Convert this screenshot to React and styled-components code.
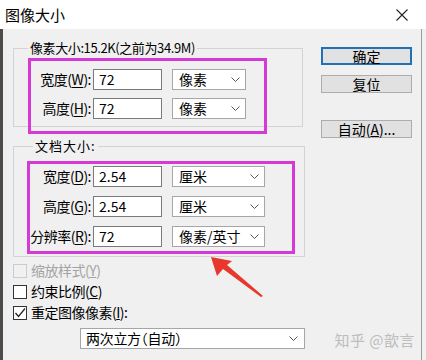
import styled, { createGlobalStyle } from "styled-components";

const GlobalStyle = createGlobalStyle`
  html, body {
    margin: 0;
    padding: 0;
    background: #f0f0f0;
  }
  body {
    font-family: "Noto Sans CJK SC", "Noto Sans", sans-serif;
    color: #000;
  }
`;

// 下拉框的小箭头
const Chevron = () => (
  <svg width="9" height="5" viewBox="0 0 9 5">
    <polyline points="0.5,0.5 4.5,4.5 8.5,0.5" fill="none" stroke="#555" strokeWidth="1" />
  </svg>
);

const CheckMark = () => (
  <svg width="12" height="12" viewBox="0 0 12 12">
    <polyline points="1.5,6 4.5,9.5 11,1.5" fill="none" stroke="#222" strokeWidth="1.2" />
  </svg>
);

export default function App() {
  const pixelRows = [
    { label: "宽度", key: "W", value: "72", unit: "像素" },
    { label: "高度", key: "H", value: "72", unit: "像素" },
  ];
  const docRows = [
    { label: "宽度", key: "D", value: "2.54", unit: "厘米" },
    { label: "高度", key: "G", value: "2.54", unit: "厘米" },
    { label: "分辨率", key: "R", value: "72", unit: "像素/英寸" },
  ];

  return (
    <>
      <GlobalStyle />
      <Window>
        <TitleBar>
          <span>图像大小</span>
          <svg width="12" height="12" viewBox="0 0 12 12">
            <path d="M0.5 0.5 L11.5 11.5 M11.5 0.5 L0.5 11.5" stroke="#222" strokeWidth="1.1" />
          </svg>
        </TitleBar>

        <Main>
          <LeftCol>
            <Group $width={290} $gap={11}>
              <Legend $indent={14}>像素大小:15.2K(之前为34.9M)</Legend>
              <Rows $top={13} $bottom={7} $gap={8}>
                {pixelRows.map((r) => (
                  <Row key={r.key}>
                    <Label>
                      {r.label}(<u>{r.key}</u>):
                    </Label>
                    <Input>{r.value}</Input>
                    <Select $width={74}>
                      <span>{r.unit}</span>
                      <Chevron />
                    </Select>
                  </Row>
                ))}
              </Rows>
            </Group>

            <Group $width={292} $gap={11}>
              <Legend $indent={19} $spacing={1}>
                文档大小:
              </Legend>
              <Rows $top={12} $bottom={9} $gap={9}>
                {docRows.map((r) => (
                  <Row key={r.key}>
                    <Label>
                      {r.label}(<u>{r.key}</u>):
                    </Label>
                    <Input>{r.value}</Input>
                    <Select $width={93}>
                      <span>{r.unit}</span>
                      <Chevron />
                    </Select>
                  </Row>
                ))}
              </Rows>
            </Group>

            <CheckList>
              <CheckRow $disabled>
                <Box $disabled />
                <span>
                  缩放样式(<u>Y</u>)
                </span>
              </CheckRow>
              <CheckRow>
                <Box />
                <span>
                  约束比例(<u>C</u>)
                </span>
              </CheckRow>
              <CheckRow>
                <Box>
                  <CheckMark />
                </Box>
                <span>
                  重定图像像素(<u>I</u>):
                </span>
              </CheckRow>
            </CheckList>

            <Resample>
              <span>两次立方（自动）</span>
              <Chevron />
            </Resample>
          </LeftCol>

          <RightCol>
            <Button $primary>确定</Button>
            <Button>复位</Button>
            <Button $space={17}>
              自动(<u>A</u>)...
            </Button>
          </RightCol>
        </Main>

        {/* 标注：洋红色框和红色箭头 */}
        <Highlight style={{ left: 28, top: 58, width: 239, height: 76 }} />
        <Highlight style={{ left: 27, top: 161, width: 268, height: 93 }} />
        <Arrow width="70" height="50" viewBox="200 250 70 50">
          <polygon
            points="211,257 232,261 227,265 263,296 261,297 223,269 217,276"
            fill="#e8372c"
          />
        </Arrow>

        <Watermark>知乎 @歆言</Watermark>
      </Window>
    </>
  );
}

const Window = styled.div`
  position: relative;
  width: 426px;
  height: 360px;
  overflow: hidden;
  background: #f0f0f0;
`;

const TitleBar = styled.div`
  height: 29px;
  background: #fff;
  display: flex;
  align-items: center;
  justify-content: space-between;
  padding: 0 18px 0 5px;
  font-size: 15px;
  line-height: 18px;
  color: #000;
`;

const Main = styled.div`
  display: flex;
  height: 331px;
  border-left: 3px solid #4e4a47;
  border-right: 1px solid #9c9c9c;
  margin-right: 4px;
  box-sizing: border-box;
`;

const LeftCol = styled.div`
  width: 292px;
  padding-left: 10px;
  flex-shrink: 0;
`;

const RightCol = styled.div`
  display: flex;
  flex-direction: column;
  gap: 10px;
  margin-left: 16px;
  padding-top: 18px;
`;

const Group = styled.fieldset`
  width: ${(p) => p.$width}px;
  box-sizing: border-box;
  margin: ${(p) => p.$gap}px 0 0;
  padding: 0;
  border: 1px solid #d3d3d3;
  min-inline-size: 0;
`;

const Legend = styled.legend`
  margin-left: ${(p) => p.$indent}px;
  padding: 0 2px;
  font-size: 13px;
  line-height: 16px;
  letter-spacing: ${(p) => (p.$spacing !== undefined ? p.$spacing : -0.4)}px;
`;

const Rows = styled.div`
  display: flex;
  flex-direction: column;
  gap: ${(p) => p.$gap}px;
  padding: ${(p) => p.$top}px 0 ${(p) => p.$bottom}px;
`;

const Row = styled.div`
  display: flex;
  align-items: center;
  height: 21px;
`;

const Label = styled.div`
  width: 77px;
  text-align: right;
  font-size: 14px;
  line-height: 21px;
  letter-spacing: -0.5px;
  margin-right: 2px;
  white-space: nowrap;

  u {
    text-underline-offset: 2px;
  }
`;

const Input = styled.div`
  width: 69px;
  height: 21px;
  box-sizing: border-box;
  border: 1px solid #7a7a7a;
  background: #fff;
  padding-left: 5px;
  font-size: 14px;
  line-height: 19px;
  margin-right: 10px;
`;

const Select = styled.div`
  width: ${(p) => p.$width}px;
  height: 21px;
  box-sizing: border-box;
  border: 1px solid #a6a6a6;
  background: #fff;
  display: flex;
  align-items: center;
  justify-content: space-between;
  padding: 0 5px 0 6px;
  font-size: 14px;
  line-height: 19px;
`;

const CheckList = styled.div`
  margin-top: 3px;
  display: flex;
  flex-direction: column;
`;

const CheckRow = styled.div`
  display: flex;
  align-items: center;
  gap: 4px;
  height: 21px;
  font-size: 14px;
  line-height: 21px;
  letter-spacing: -0.5px;
  color: ${(p) => (p.$disabled ? "#a3a3a3" : "#000")};
`;

const Box = styled.div`
  width: 14px;
  height: 14px;
  box-sizing: border-box;
  border: 1px solid ${(p) => (p.$disabled ? "#cccccc" : "#333")};
  background: ${(p) => (p.$disabled ? "#f0f0f0" : "#fff")};
  display: flex;
  align-items: center;
  justify-content: center;
`;

const Resample = styled.div`
  margin: 5px 0 0 67px;
  width: 225px;
  height: 21px;
  box-sizing: border-box;
  border: 1px solid #a6a6a6;
  background: #fff;
  display: flex;
  align-items: center;
  justify-content: space-between;
  padding: 0 6px 0 5px;
  font-size: 14px;
  font-feature-settings: "halt";
  letter-spacing: -0.3px;
  line-height: 19px;
`;

const Button = styled.div`
  width: 91px;
  height: 18px;
  box-sizing: border-box;
  margin-top: ${(p) => p.$space || 0}px;
  border: ${(p) => (p.$primary ? "2px solid #1f72b8" : "1px solid #adadad")};
  background: #e1e1e1;
  display: flex;
  align-items: center;
  justify-content: center;
  font-size: 14px;
  line-height: 16px;
`;

const Highlight = styled.div`
  position: absolute;
  box-sizing: border-box;
  border: 3.5px solid #d53ad6;
  pointer-events: none;
`;

const Arrow = styled.svg`
  position: absolute;
  left: 200px;
  top: 250px;
`;

const Watermark = styled.div`
  position: absolute;
  right: 11px;
  bottom: 12px;
  font-size: 15px;
  line-height: 16px;
  color: #bdbdbd;
  letter-spacing: 0.5px;
`;
